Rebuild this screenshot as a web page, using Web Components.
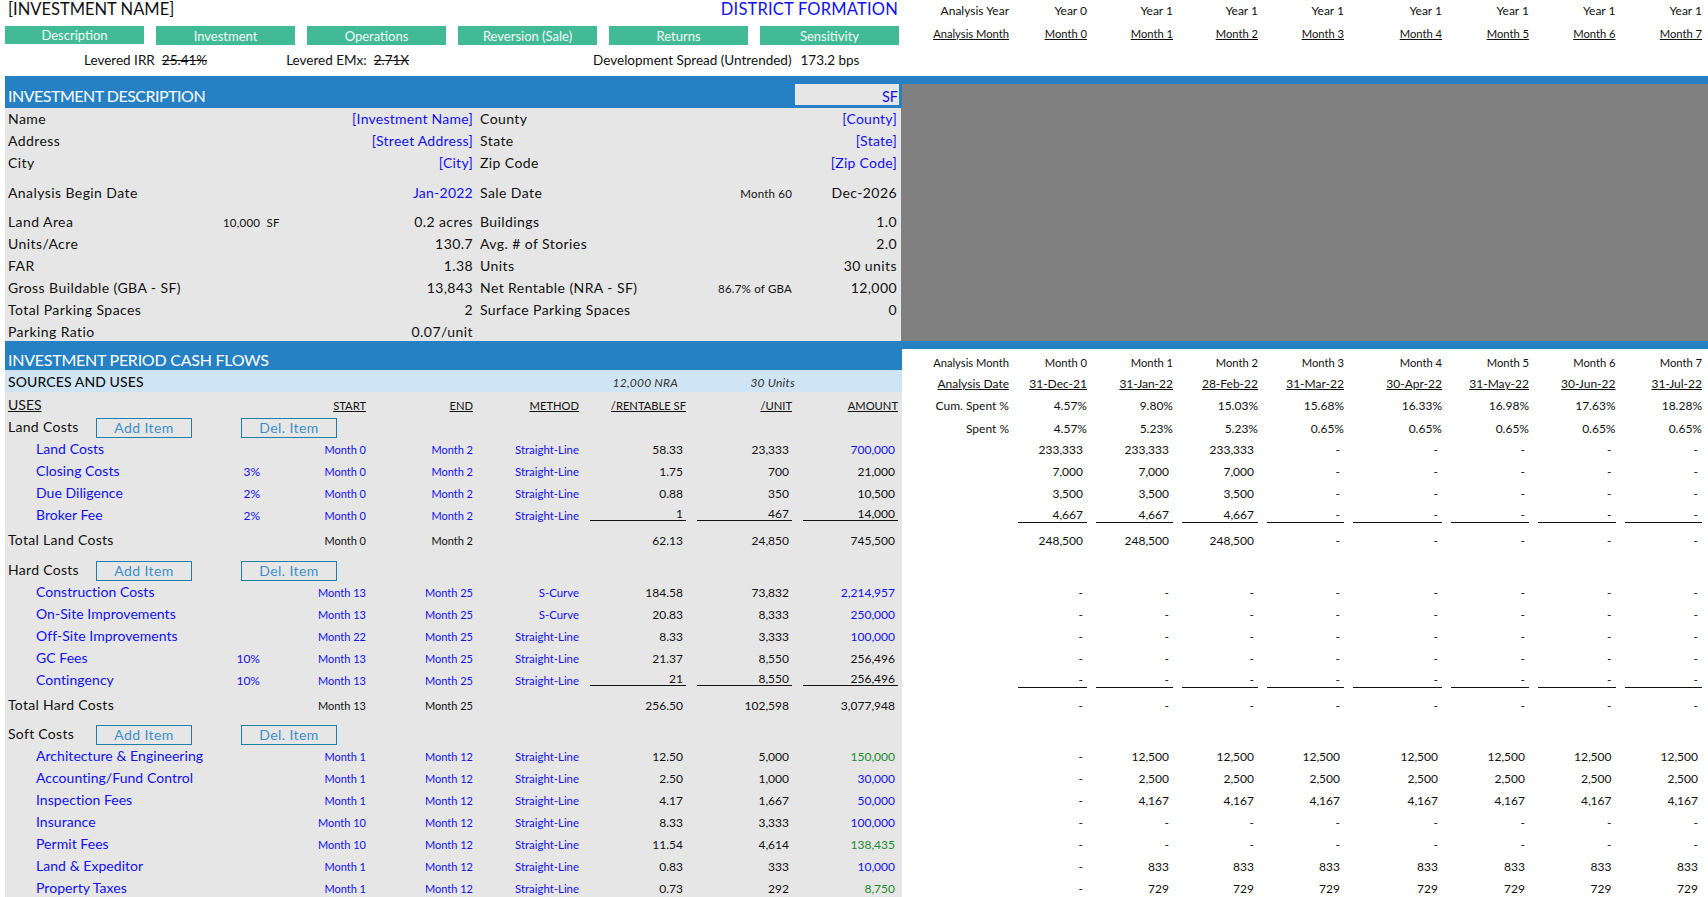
<!DOCTYPE html>
<html>
<head>
<meta charset="utf-8">
<title>District Formation</title>
<style>
  html, body { margin: 0; height: 897px; overflow: hidden; background: #fff; }
  body { font-family: Lato, "Liberation Sans", sans-serif; color: #111; }
  model-sheet { --blue: #2581c4; --panel: #e6e6e6; --input: #1010f0; }
</style>
</head>
<body>
<model-sheet>
  <top-strip>
    <nav-tab slot="tabs" short>Description</nav-tab>
    <nav-tab slot="tabs">Investment</nav-tab>
    <nav-tab slot="tabs">Operations</nav-tab>
    <nav-tab slot="tabs">Reversion (Sale)</nav-tab>
    <nav-tab slot="tabs">Returns</nav-tab>
    <nav-tab slot="tabs">Sensitivity</nav-tab>
  </top-strip>

  <desc-section>
    <desc-row l1="Name" v1="[Investment Name]" l2="County" v2="[County]" input></desc-row>
    <desc-row l1="Address" v1="[Street Address]" l2="State" v2="[State]" input></desc-row>
    <desc-row l1="City" v1="[City]" l2="Zip Code" v2="[Zip Code]" input></desc-row>
    <sheet-gap h="8"></sheet-gap>
    <desc-row l1="Analysis Begin Date" v1="Jan-2022" l2="Sale Date" n2="Month 60" v2="Dec-2026" input1></desc-row>
    <sheet-gap h="7"></sheet-gap>
    <desc-row l1="Land Area" n1="10,000&nbsp; SF" v1="0.2 acres" l2="Buildings" v2="1.0"></desc-row>
    <desc-row l1="Units/Acre" v1="130.7" l2="Avg. # of Stories" v2="2.0"></desc-row>
    <desc-row l1="FAR" v1="1.38" l2="Units" v2="30 units"></desc-row>
    <desc-row l1="Gross Buildable (GBA - SF)" v1="13,843" l2="Net Rentable (NRA - SF)" n2="86.7% of GBA" v2="12,000"></desc-row>
    <desc-row l1="Total Parking Spaces" v1="2" l2="Surface Parking Spaces" v2="0"></desc-row>
    <desc-row l1="Parking Ratio" v1="0.07/unit" style="--h:20px"></desc-row>
  </desc-section>

  <cash-section>
    <group-row label="Land Costs" flow-label="Spent %" flow="4.57%|5.23%|5.23%|0.65%|0.65%|0.65%|0.65%|0.65%"></group-row>
    <cost-row label="Land Costs" start="Month 0" end="Month 2" method="Straight-Line" sf="58.33" unit="23,333" amount="700,000" tone="input" flows="233,333|233,333|233,333|-|-|-|-|-"></cost-row>
    <cost-row label="Closing Costs" pct="3%" start="Month 0" end="Month 2" method="Straight-Line" sf="1.75" unit="700" amount="21,000" flows="7,000|7,000|7,000|-|-|-|-|-"></cost-row>
    <cost-row label="Due Diligence" pct="2%" start="Month 0" end="Month 2" method="Straight-Line" sf="0.88" unit="350" amount="10,500" flows="3,500|3,500|3,500|-|-|-|-|-"></cost-row>
    <cost-row label="Broker Fee" pct="2%" start="Month 0" end="Month 2" method="Straight-Line" sf="1" unit="467" amount="14,000" flows="4,667|4,667|4,667|-|-|-|-|-" rule style="--h:21px"></cost-row>
    <sheet-gap h="4" panel></sheet-gap>
    <cost-row total label="Total Land Costs" start="Month 0" end="Month 2" sf="62.13" unit="24,850" amount="745,500" flows="248,500|248,500|248,500|-|-|-|-|-"></cost-row>
    <sheet-gap h="8" panel></sheet-gap>

    <group-row label="Hard Costs"></group-row>
    <cost-row label="Construction Costs" start="Month 13" end="Month 25" method="S-Curve" sf="184.58" unit="73,832" amount="2,214,957" tone="input" flows="-|-|-|-|-|-|-|-"></cost-row>
    <cost-row label="On-Site Improvements" start="Month 13" end="Month 25" method="S-Curve" sf="20.83" unit="8,333" amount="250,000" tone="input" flows="-|-|-|-|-|-|-|-"></cost-row>
    <cost-row label="Off-Site Improvements" start="Month 22" end="Month 25" method="Straight-Line" sf="8.33" unit="3,333" amount="100,000" tone="input" flows="-|-|-|-|-|-|-|-"></cost-row>
    <cost-row label="GC Fees" pct="10%" start="Month 13" end="Month 25" method="Straight-Line" sf="21.37" unit="8,550" amount="256,496" flows="-|-|-|-|-|-|-|-"></cost-row>
    <cost-row label="Contingency" pct="10%" start="Month 13" end="Month 25" method="Straight-Line" sf="21" unit="8,550" amount="256,496" flows="-|-|-|-|-|-|-|-" rule style="--h:21px"></cost-row>
    <sheet-gap h="4" panel></sheet-gap>
    <cost-row total label="Total Hard Costs" start="Month 13" end="Month 25" sf="256.50" unit="102,598" amount="3,077,948" flows="-|-|-|-|-|-|-|-"></cost-row>
    <sheet-gap h="7" panel></sheet-gap>

    <group-row label="Soft Costs"></group-row>
    <cost-row label="Architecture &amp; Engineering" start="Month 1" end="Month 12" method="Straight-Line" sf="12.50" unit="5,000" amount="150,000" tone="link" flows="-|12,500|12,500|12,500|12,500|12,500|12,500|12,500"></cost-row>
    <cost-row label="Accounting/Fund Control" start="Month 1" end="Month 12" method="Straight-Line" sf="2.50" unit="1,000" amount="30,000" tone="input" flows="-|2,500|2,500|2,500|2,500|2,500|2,500|2,500"></cost-row>
    <cost-row label="Inspection Fees" start="Month 1" end="Month 12" method="Straight-Line" sf="4.17" unit="1,667" amount="50,000" tone="input" flows="-|4,167|4,167|4,167|4,167|4,167|4,167|4,167"></cost-row>
    <cost-row label="Insurance" start="Month 10" end="Month 12" method="Straight-Line" sf="8.33" unit="3,333" amount="100,000" tone="input" flows="-|-|-|-|-|-|-|-"></cost-row>
    <cost-row label="Permit Fees" start="Month 10" end="Month 12" method="Straight-Line" sf="11.54" unit="4,614" amount="138,435" tone="link" flows="-|-|-|-|-|-|-|-"></cost-row>
    <cost-row label="Land &amp; Expeditor" start="Month 1" end="Month 12" method="Straight-Line" sf="0.83" unit="333" amount="10,000" tone="input" flows="-|833|833|833|833|833|833|833"></cost-row>
    <cost-row label="Property Taxes" start="Month 1" end="Month 12" method="Straight-Line" sf="0.73" unit="292" amount="8,750" tone="link" flows="-|729|729|729|729|729|729|729"></cost-row>
  </cash-section>
</model-sheet>

<script>
const FONT = 'Lato, "Liberation Sans", sans-serif';
const COST_COLUMNS = "210px 45px 106px 107px 106px 107px 106px 106px";

class ModelSheet extends HTMLElement {
  constructor() {
    super();
    this.attachShadow({ mode: "open" });
    this.shadowRoot.innerHTML = `
      <style>
        :host { display: flex; flex-direction: column; width: 1708px; height: 897px; overflow: hidden; }
      </style>
      <slot></slot>
    `;
  }
}

// one spreadsheet row of the month columns, right of the frozen panel
class FlowCells extends HTMLElement {
  constructor() {
    super();
    this.attachShadow({ mode: "open" });
  }

  connectedCallback() {
    const values = (this.getAttribute("values") || "").split("|");
    const cells = values.map((v) => `<span class="c">${v}</span>`).join("");
    this.shadowRoot.innerHTML = `
      <style>
        :host {
          display: grid;
          grid-template-columns: 107px 78px 86px 85px 86px 98px 87px 86.5px 86.5px;
          width: 806px;
          font: 12px/15px ${FONT};
          color: #111;
          align-items: center;
          flex: none;
        }
        .c { text-align: right; white-space: nowrap; padding-top: 1px; }
        :host([kind="head"]) { align-items: end; }
        :host([kind="head"]) .c { padding: 0 0 var(--lift, 0); }
        :host([kind="data"]) .c + .c { padding-right: 4px; }
        :host([rule]) { align-items: end; }
        :host([rule]) .c { padding-top: 0; margin-bottom: 2px; }
        :host([rule]) .c + .c { border-bottom: 1px solid #111; margin-left: 9px; }
        :host([under]) .c { text-decoration: underline; }
      </style>
      <span class="c">${this.getAttribute("label") || ""}</span>${cells}
    `;
  }
}

class NavTab extends HTMLElement {
  constructor() {
    super();
    this.attachShadow({ mode: "open" });
    this.shadowRoot.innerHTML = `
      <style>
        :host {
          display: flex;
          align-items: center;
          justify-content: center;
          height: 19px;
          background: #43ba96;
          color: #f2faf7;
          font: 13px ${FONT};
        }
        :host([short]) { height: 18px; }
      </style>
      <slot></slot>
    `;
  }
}

class TopStrip extends HTMLElement {
  constructor() {
    super();
    this.attachShadow({ mode: "open" });
    this.shadowRoot.innerHTML = `
      <style>
        :host { display: flex; height: 76px; flex: none; font-family: ${FONT}; }
        .left { width: 897px; margin-left: 5px; flex: none; }
        .title { display: flex; justify-content: space-between; height: 26px; padding: 0 4px 0 3px; font-size: 16.5px; line-height: 19px; color: #111; }
        .title b { font-weight: 400; letter-spacing: .2px; color: var(--input); }
        .tabs { display: grid; grid-template-columns: repeat(6, 139px); column-gap: 12px; align-items: start; }
        .metrics { display: flex; height: 29px; align-items: center; font-size: 13.5px; color: #111; }
        .metrics span { white-space: nowrap; }
        .metrics s { text-decoration-thickness: 1px; margin-left: 7px; }
        .m1 { margin-left: 79px; }
        .m2 { margin-left: 79px; }
        .m3 { margin-left: 184px; }
        .m3 em { font-style: normal; margin-left: 9px; }
        .right { padding-top: 3px; }
        flow-cells + flow-cells { margin-top: 8px; }
      </style>
      <div class="left">
        <div class="title"><span>[INVESTMENT NAME]</span><b>DISTRICT FORMATION</b></div>
        <div class="tabs"><slot name="tabs"></slot></div>
        <div class="metrics">
          <span class="m1">Levered IRR<s>25.41%</s></span>
          <span class="m2">Levered EMx:<s>2.71X</s></span>
          <span class="m3">Development Spread (Untrended)<em>173.2 bps</em></span>
        </div>
      </div>
      <div class="right">
        <flow-cells kind="head" label="Analysis Year" values="Year 0|Year 1|Year 1|Year 1|Year 1|Year 1|Year 1|Year 1"></flow-cells>
        <flow-cells kind="head" under style="font-size:11.2px" label="Analysis Month" values="Month 0|Month 1|Month 2|Month 3|Month 4|Month 5|Month 6|Month 7"></flow-cells>
      </div>
    `;
  }
}

class SheetGap extends HTMLElement {
  constructor() {
    super();
    this.attachShadow({ mode: "open" });
    this.shadowRoot.innerHTML = `
      <style>
        :host { display: block; }
        :host([panel]) { width: 897px; margin-left: 5px; background: var(--panel); }
      </style>
    `;
  }

  connectedCallback() {
    this.style.height = `${this.getAttribute("h")}px`;
  }
}

class DescSection extends HTMLElement {
  constructor() {
    super();
    this.attachShadow({ mode: "open" });
    this.shadowRoot.innerHTML = `
      <style>
        :host { display: block; flex: none; font-family: ${FONT}; }
        .band { height: 8px; margin-left: 5px; background: var(--blue); }
        .body { display: flex; height: 257px; margin-left: 5px; }
        .panel { width: 897px; flex: none; background: #808080; }
        .head {
          display: flex;
          justify-content: space-between;
          height: 24px;
          background: var(--blue);
          color: #fff;
        }
        .head h2 { margin: 0; padding: 1px 0 0 3px; font-size: 16px; letter-spacing: -.5px; line-height: 22px; font-weight: 400; }
        .unit {
          width: 104px;
          height: 21px;
          margin-right: 3px;
          padding-right: 1px;
          box-sizing: border-box;
          background: var(--panel);
          color: var(--input);
          text-align: right;
          font-size: 14.5px;
          line-height: 26px;
        }
        .rows { width: 896px; background: var(--panel); }
        .shade { flex: 1; background: #808080; }
      </style>
      <div class="band"></div>
      <div class="body">
        <div class="panel">
          <div class="head"><h2>INVESTMENT DESCRIPTION</h2><div class="unit">SF</div></div>
          <div class="rows"><slot></slot></div>
        </div>
        <div class="shade"></div>
      </div>
    `;
  }
}

class DescRow extends HTMLElement {
  constructor() {
    super();
    this.attachShadow({ mode: "open" });
  }

  connectedCallback() {
    const a = (n) => this.getAttribute(n) || "";
    this.shadowRoot.innerHTML = `
      <style>
        :host {
          display: grid;
          grid-template-columns: 218px 60px 190px 7px 180px 132px 105px;
          height: var(--h, 22px);
          line-height: 22px;
          font-size: 14px;
          letter-spacing: .42px;
          color: #111;
          white-space: nowrap;
        }
        .l1 { padding-left: 3px; }
        .n { font-size: 11.5px; letter-spacing: .2px; padding-top: 1px; }
        .n2 { text-align: right; }
        .v { text-align: right; }
        :host([input]) .v, :host([input1]) .v1 { color: var(--input); letter-spacing: .25px; }
      </style>
      <span class="l1">${a("l1")}</span>
      <span class="n">${a("n1")}</span>
      <span class="v v1">${a("v1")}</span>
      <span></span>
      <span>${a("l2")}</span>
      <span class="n n2">${a("n2")}</span>
      <span class="v">${a("v2")}</span>
    `;
  }
}

class CashSection extends HTMLElement {
  constructor() {
    super();
    this.attachShadow({ mode: "open" });
    this.shadowRoot.innerHTML = `
      <style>
        :host { display: block; font-family: ${FONT}; }
        .band { height: 8px; margin-left: 5px; background: var(--blue); }
        .row { display: flex; margin-left: 5px; }
        .main { width: 897px; flex: none; }
        .head { height: 21px; background: var(--blue); color: #fff; }
        .head h2 { margin: 0; padding-left: 3px; font-size: 16px; letter-spacing: -.25px; line-height: 21px; font-weight: 400; }
        .sources {
          display: grid;
          grid-template-columns: 566px 107px 117px 107px;
          height: 22px;
          background: #cfe5f6;
          font-size: 14px;
          line-height: 24px;
          color: #111;
        }
        .sources b { padding-left: 3px; font-weight: 500; letter-spacing: .1px; }
        .sources i { font-size: 12px; letter-spacing: .2px; text-align: right; line-height: 25px; color: #333; }
        .columns {
          display: grid;
          grid-template-columns: ${COST_COLUMNS};
          height: 24px;
          background: var(--panel);
          font-size: 11.2px;
          line-height: 27px;
        }
        .columns u { text-align: right; }
        .columns .uses { grid-column: 1 / 3; padding-left: 3px; text-align: left; font-size: 14px; line-height: 25px; }
        .lift { --lift: 3px; }
      </style>
      <div class="band"></div>
      <div class="row">
        <div class="main head"><h2>INVESTMENT PERIOD CASH FLOWS</h2></div>
        <flow-cells kind="head" style="font-size:11.2px" label="Analysis Month" values="Month 0|Month 1|Month 2|Month 3|Month 4|Month 5|Month 6|Month 7"></flow-cells>
      </div>
      <div class="row">
        <div class="main sources"><b>SOURCES AND USES</b><i>12,000 NRA</i><i>30 Units</i></div>
        <flow-cells kind="head" under style="--lift:1px" label="Analysis Date" values="31-Dec-21|31-Jan-22|28-Feb-22|31-Mar-22|30-Apr-22|31-May-22|30-Jun-22|31-Jul-22"></flow-cells>
      </div>
      <div class="row">
        <div class="main columns">
          <u class="uses">USES</u>
          <u>START</u><u>END</u><u>METHOD</u><u>/RENTABLE SF</u><u>/UNIT</u><u>AMOUNT</u>
        </div>
        <flow-cells class="lift" kind="head" label="Cum. Spent %" values="4.57%|9.80%|15.03%|15.68%|16.33%|16.98%|17.63%|18.28%"></flow-cells>
      </div>
      <slot></slot>
    `;
  }
}

class GroupRow extends HTMLElement {
  constructor() {
    super();
    this.attachShadow({ mode: "open" });
  }

  connectedCallback() {
    const flow = this.getAttribute("flow");
    this.shadowRoot.innerHTML = `
      <style>
        :host { display: flex; height: 22px; margin-left: 5px; font-family: ${FONT}; }
        .main {
          display: flex;
          align-items: center;
          width: 897px;
          flex: none;
          background: var(--panel);
          font-size: 14px;
          color: #111;
        }
        .name { width: 88px; padding: 0 0 1px 3px; letter-spacing: .3px; }
        .btn {
          display: flex;
          align-items: center;
          justify-content: center;
          box-sizing: border-box;
          width: 96px;
          height: 20px;
          margin-top: 1px;
          border: 1px solid #1f7fa8;
          color: #3d8fc9;
          font-size: 14px;
          letter-spacing: .4px;
        }
        .btn + .btn { margin-left: 49px; }
        flow-cells { --lift: 2px; }
      </style>
      <div class="main">
        <span class="name">${this.getAttribute("label")}</span>
        <span class="btn">Add Item</span>
        <span class="btn">Del. Item</span>
      </div>
      ${flow ? `<flow-cells kind="head" label="${this.getAttribute("flow-label")}" values="${flow}"></flow-cells>` : ""}
    `;
  }
}

class CostRow extends HTMLElement {
  constructor() {
    super();
    this.attachShadow({ mode: "open" });
  }

  connectedCallback() {
    const a = (n) => this.getAttribute(n) || "";
    const rule = this.hasAttribute("rule") ? "rule" : "";
    this.shadowRoot.innerHTML = `
      <style>
        :host {
          display: flex;
          height: var(--h, 22px);
          margin-left: 5px;
          font-family: ${FONT};
          color: #111;
        }
        .main {
          display: grid;
          grid-template-columns: ${COST_COLUMNS};
          align-items: center;
          width: 897px;
          flex: none;
          background: var(--panel);
          font-size: 12px;
          line-height: 15px;
          white-space: nowrap;
        }
        .main > * { padding-top: 1px; }
        .main > .label { padding: 0 0 1px 31px; font-size: 14px; letter-spacing: .05px; color: var(--input); }
        :host([total]) .main > .label { padding-left: 3px; color: #111; letter-spacing: .3px; }
        .start, .end { font-size: 11px; }
        .method { font-size: 11.4px; }
        .pct, .start, .end, .method { text-align: right; color: var(--input); }
        :host([total]) .start, :host([total]) .end { color: #111; }
        .num { text-align: right; padding-right: 3px; }
        :host([rule]) .main > .num { align-self: end; padding-top: 0; margin: 0 0 4px 11px; line-height: 12px; border-bottom: 1px solid #111; }
        :host([tone="input"]) .amount { color: var(--input); }
        :host([tone="link"]) .amount { color: #1b8a2e; }
      </style>
      <div class="main">
        <span class="label">${a("label")}</span>
        <span class="pct">${a("pct")}</span>
        <span class="start">${a("start")}</span>
        <span class="end">${a("end")}</span>
        <span class="method">${a("method")}</span>
        <span class="num">${a("sf")}</span>
        <span class="num">${a("unit")}</span>
        <span class="num amount">${a("amount")}</span>
      </div>
      <flow-cells kind="data" ${rule} values="${a("flows")}"></flow-cells>
    `;
  }
}

customElements.define("model-sheet", ModelSheet);
customElements.define("flow-cells", FlowCells);
customElements.define("nav-tab", NavTab);
customElements.define("top-strip", TopStrip);
customElements.define("sheet-gap", SheetGap);
customElements.define("desc-section", DescSection);
customElements.define("desc-row", DescRow);
customElements.define("cash-section", CashSection);
customElements.define("group-row", GroupRow);
customElements.define("cost-row", CostRow);
</script>
</body>
</html>
